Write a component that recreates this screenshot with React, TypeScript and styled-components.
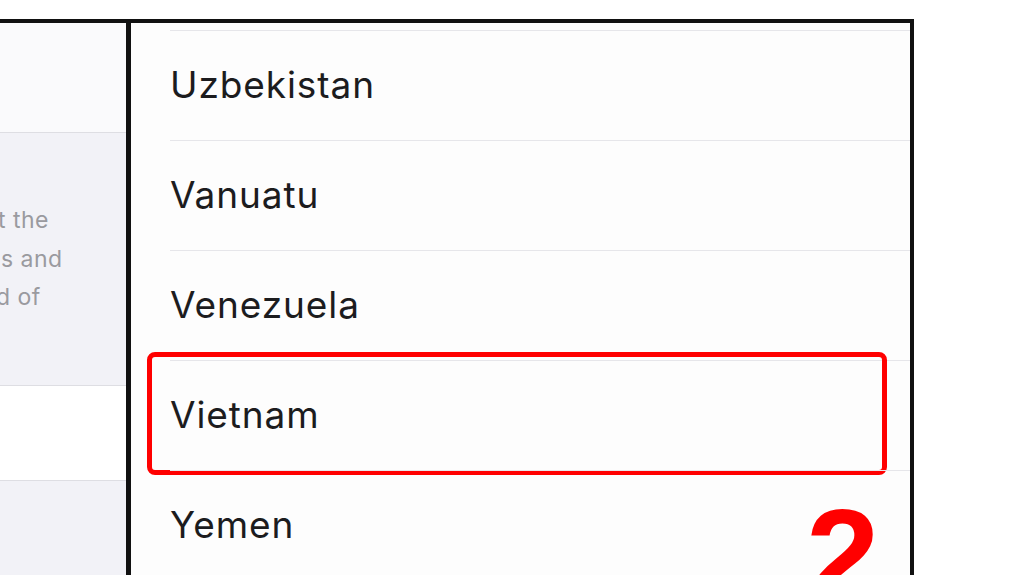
import styled, { createGlobalStyle } from "styled-components";

const countries = ["Uzbekistan", "Vanuatu", "Venezuela", "Vietnam", "Yemen"];

const noteLines = [
  { text: "t the", shift: -2 },
  { text: "s and", shift: 1 },
  { text: "d of", shift: -4 },
];

const App = () => {
  return (
    <>
      <GlobalStyle />
      <Frame>
        <SidePanel>
          <SideBlock $tone="light" $height={109} />
          <SideBlock $tone="gray" $height={252}>
            <NoteText>
              {noteLines.map((line) => (
                <NoteLine key={line.text} $shift={line.shift}>
                  {line.text}
                </NoteLine>
              ))}
            </NoteText>
          </SideBlock>
          <SideBlock $tone="white" $height={94} />
          <SideBlock $tone="gray" $height={120} />
        </SidePanel>
        <ListPanel>
          <CountryList>
            {countries.map((name) => (
              <CountryRow key={name}>
                <CountryName>{name}</CountryName>
                {name === "Vietnam" && <Highlight />}
              </CountryRow>
            ))}
          </CountryList>
          <StepNumber>2</StepNumber>
        </ListPanel>
      </Frame>
    </>
  );
};

const GlobalStyle = createGlobalStyle`
  html, body {
    margin: 0;
    padding: 0;
    background: #ffffff;
    overflow: hidden;
  }
  body {
    font-family: Inter, "Liberation Sans", sans-serif;
  }
`;

const Frame = styled.div({
  marginTop: 19,
  width: 914,
  height: 556,
  boxSizing: "border-box",
  borderTop: "4px solid #111",
  borderRight: "4px solid #111",
  display: "flex",
  overflow: "hidden",
});

const SidePanel = styled.div({
  width: 126,
  flexShrink: 0,
  display: "flex",
  flexDirection: "column",
  overflow: "hidden",
});

const tones: Record<string, string> = {
  light: "#fafafc",
  gray: "#f2f2f7",
  white: "#ffffff",
};

const SideBlock = styled.div<{ $tone: string; $height: number }>`
  flex-shrink: 0;
  height: ${(p) => p.$height}px;
  background: ${(p) => tones[p.$tone]};
  border-bottom: 1px solid #dedee3;
`;

const NoteText = styled.div({
  paddingTop: 68,
  fontFamily: "Inter, 'Liberation Sans', sans-serif",
  fontSize: 23,
  lineHeight: "38.5px",
  color: "#9a9a9f",
  letterSpacing: 0.5,
  whiteSpace: "nowrap",
});

const NoteLine = styled.div<{ $shift: number }>`
  margin-left: ${(p) => p.$shift}px;
`;

const ListPanel = styled.div({
  position: "relative",
  flex: 1,
  borderLeft: "5px solid #111",
  background: "#fdfdfd",
  overflow: "hidden",
});

const CountryList = styled.div({
  paddingTop: 7,
  display: "flex",
  flexDirection: "column",
});

const CountryRow = styled.div({
  position: "relative",
  marginLeft: 39,
  height: 109,
  borderTop: "1.5px solid #e6e6ea",
  display: "flex",
  alignItems: "center",
});

const CountryName = styled.span({
  fontFamily: "Inter, 'Liberation Sans', sans-serif",
  fontSize: 37,
  color: "#1c1c1e",
  letterSpacing: 0.9,
  marginTop: -2,
});

const Highlight = styled.div({
  position: "absolute",
  left: -23,
  right: 23,
  top: -9,
  bottom: -5,
  border: "5px solid #ff0000",
  borderRadius: 8,
  pointerEvents: "none",
});

const StepNumber = styled.div({
  position: "absolute",
  left: 675,
  top: 467,
  fontFamily: "'Liberation Sans', Arial, sans-serif",
  fontWeight: 700,
  fontSize: 132,
  lineHeight: 1,
  color: "#ff0000",
});

export default App;
